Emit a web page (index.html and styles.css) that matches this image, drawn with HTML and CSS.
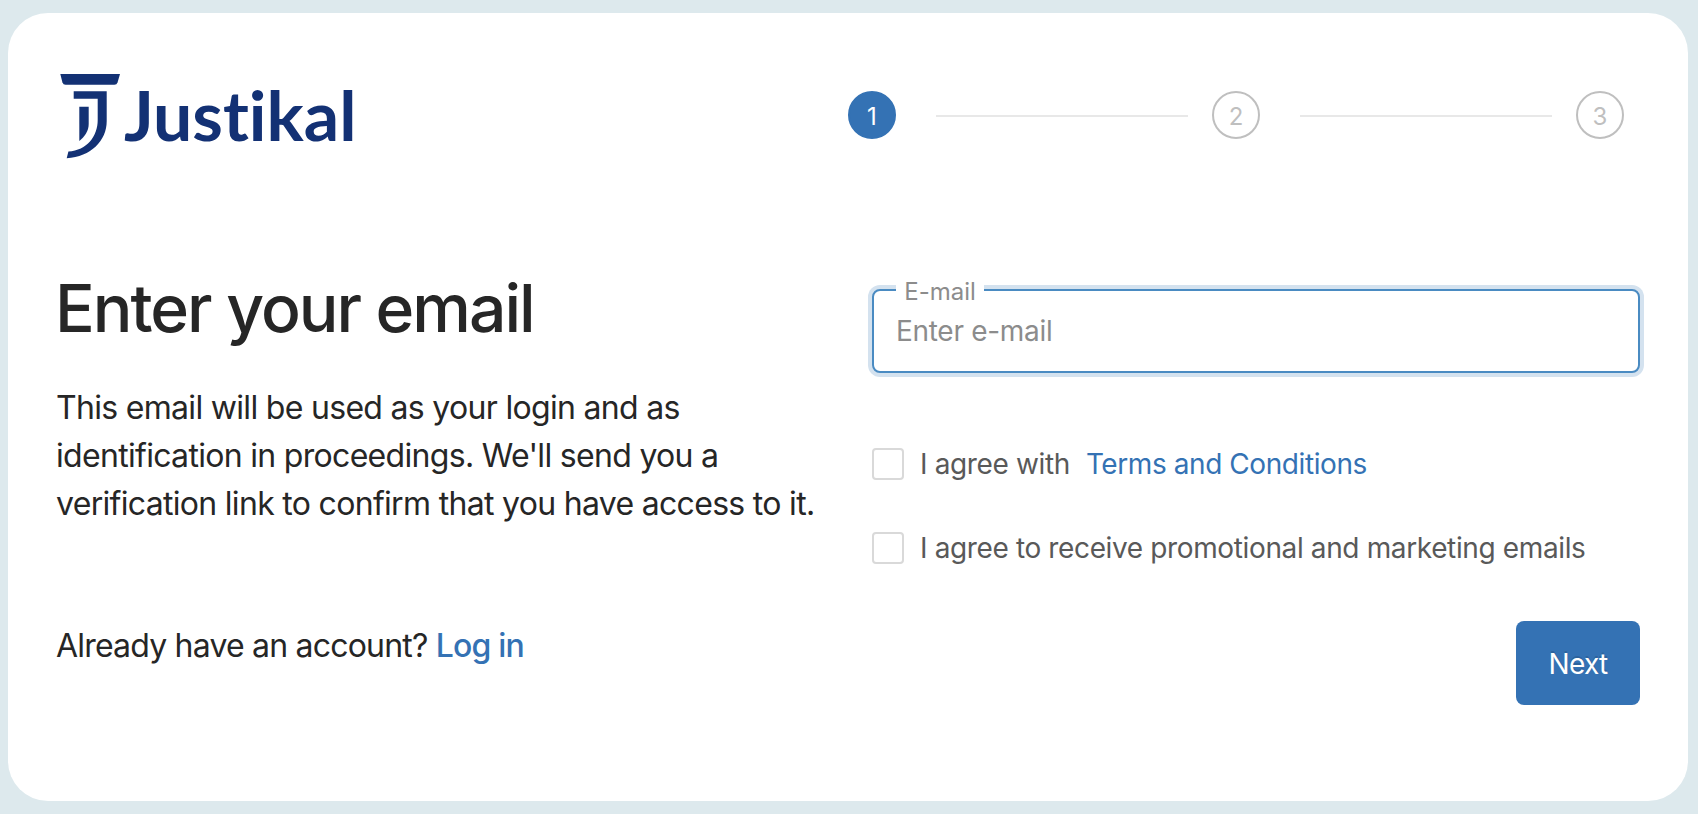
FILE: index.html
```html
<!DOCTYPE html>
<html lang="en">
  <head>
    <meta charset="UTF-8" />
    <meta name="viewport" content="width=device-width, initial-scale=1.0" />
    <title>Justikal - Registration</title>
    <link rel="stylesheet" href="styles.css">
  </head>
  <body>
    <main class="card">
      <header class="card-header">
        <svg class="logo" width="300" height="90" viewBox="0 0 300 90" role="img" aria-label="Justikal">
          <path d="M3.3 4H63l-2.4 8.2q-.8 2.5-3.2 2.5H8.600q-2.400 0-3.200-2.500z" />
          <path d="M16.700 21.300h33v30C49.700 70.500 34 87 9.700 88.300l1.700-6.800C30 80.500 40.700 66 40.700 50V28.700h-24z" />
          <path d="M22.300 36.700h9.400V54c0 7-4 12.500-9.400 17z" />
          <text class="logo-text" x="67" y="71.300" textLength="232.500" lengthAdjust="spacingAndGlyphs">Justikal</text>
        </svg>
        <div class="steps">
          <span class="step active">1</span>
          <span class="step-line"></span>
          <span class="step">2</span>
          <span class="step-line"></span>
          <span class="step">3</span>
        </div>
      </header>

      <div class="content">
        <section class="intro">
          <h1>Enter your email</h1>
          <p>This email will be used as your login and as<br>identification in proceedings. We'll send you a<br>verification link to confirm that you have access to it.</p>
          <p class="account">Already have an account? <a class="login" href="#">Log in</a></p>
        </section>

        <form class="form">
          <div class="field">
            <label class="field-label" for="email">E-mail</label>
            <input class="field-input" id="email" type="email" placeholder="Enter e-mail">
          </div>
          <label class="check">
            <input class="box" type="checkbox">
            <span>I agree with</span>
            <a class="terms-link" href="#">Terms and Conditions</a>
          </label>
          <label class="check">
            <input class="box" type="checkbox">
            <span>I agree to receive promotional and marketing emails</span>
          </label>
          <button class="next" type="button">Next</button>
        </form>
      </div>
    </main>
  </body>
</html>
```

FILE: styles.css
```css
* {
  margin: 0;
  padding: 0;
  box-sizing: border-box;
}

body {
  background: #dde9ed;
  color: #262626;
  font-family: Inter, "Liberation Sans", sans-serif;
  font-size: 32px;
  line-height: 48px;
  padding: 13px 10px 13px 8px;
  height: 814px;
  overflow: hidden;
}

a {
  color: #3472b4;
  text-decoration: none;
}

.card {
  height: 788px;
  padding: 57px 48px 0 48px;
  background: #fff;
  border-radius: 40px;
}

/* logo + progress */
.card-header {
  display: flex;
  justify-content: space-between;
  height: 185px;
}

.logo {
  margin-left: 1px;
  fill: #133174;
}

.logo-text {
  font-family: Lato, sans-serif;
  font-size: 68px;
  font-weight: 700;
  font-variant-ligatures: none;
}

.steps {
  display: flex;
  align-items: center;
  height: 48px;
  margin: 21px 16px 0 0;
}

.step {
  width: 48px;
  height: 48px;
  padding-top: 2px;
  border: 2px solid #bfbfbf;
  border-radius: 50%;
  color: #bfbfbf;
  font-size: 24px;
  line-height: 44px;
  text-align: center;
}

.step.active {
  background: #3472b4;
  border-color: #3472b4;
  color: #fff;
}

.step-line {
  width: 252px;
  height: 2px;
  margin: 2px 24px 0 40px;
  background: #e8e8e8;
}

/* two columns */
.content {
  display: grid;
  grid-template-columns: 816px 768px;
}

.intro {
  padding-top: 13px;
  letter-spacing: -0.69px;
  white-space: nowrap;
}

h1 {
  margin: 0 0 36px -1px;
  font-size: 66px;
  font-weight: 500;
  line-height: 80px;
  letter-spacing: -2px;
}

.account {
  margin-top: 94px;
  letter-spacing: -0.8px;
}

.login {
  font-weight: 500;
}

.form {
  display: flex;
  flex-direction: column;
  padding-top: 34px;
  color: #595959;
  font-size: 28px;
  line-height: 44px;
  letter-spacing: -0.37px;
  white-space: nowrap;
}

.field {
  position: relative;
  margin-bottom: 69px;
}

.field-input {
  display: block;
  width: 100%;
  height: 84px;
  padding: 0 22px;
  border: 2px solid #4a8bc2;
  border-radius: 8px;
  outline: none;
  box-shadow: 0 0 0 4px #d4e2ef;
  color: #262626;
  font: inherit;
  letter-spacing: -0.3px;
}

.field-input::placeholder {
  color: #8c8c8c;
}

/* sits over the top border of the input */
.field-label {
  position: absolute;
  top: -9px;
  left: 24px;
  width: 88px;
  background: #fff;
  color: #8c8c8c;
  font-size: 24px;
  line-height: 24px;
  letter-spacing: 0;
  text-align: center;
}

.check {
  display: flex;
  align-items: center;
  margin-bottom: 40px;
}

.box {
  appearance: none;
  width: 32px;
  height: 32px;
  margin-right: 16px;
  border: 2px solid #d9d9d9;
  border-radius: 4px;
}

.terms-link {
  margin-left: 16px;
  letter-spacing: -0.42px;
}

.next {
  align-self: flex-end;
  width: 124px;
  height: 84px;
  margin-top: 11px;
  padding-top: 2px;
  border: 0;
  border-radius: 8px;
  background: #3472b4;
  color: #fff;
  font: inherit;
  letter-spacing: -0.7px;
  text-shadow: 0 -2px 0 rgba(0, 0, 0, 0.12);
}
```
